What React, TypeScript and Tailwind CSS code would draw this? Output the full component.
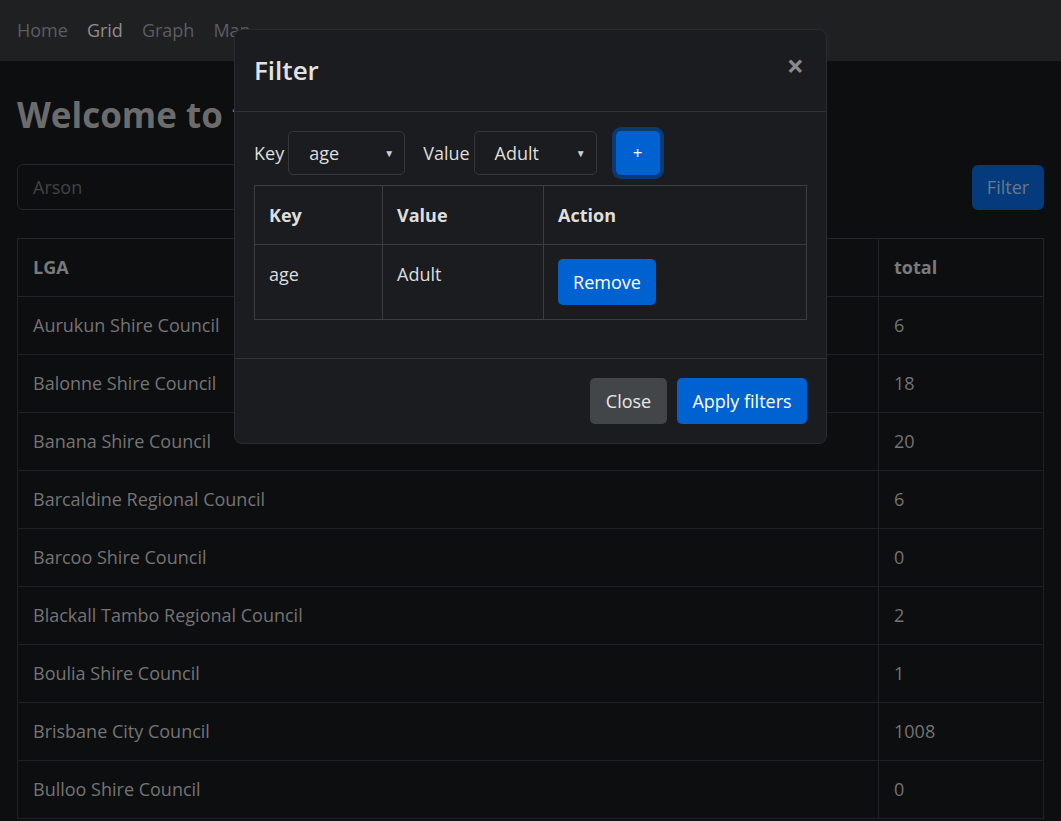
import React from 'react';

const rows: [string, string][] = [
  ['Aurukun Shire Council', '6'],
  ['Balonne Shire Council', '18'],
  ['Banana Shire Council', '20'],
  ['Barcaldine Regional Council', '6'],
  ['Barcoo Shire Council', '0'],
  ['Blackall Tambo Regional Council', '2'],
  ['Boulia Shire Council', '1'],
  ['Brisbane City Council', '1008'],
  ['Bulloo Shire Council', '0'],
];

const font = { fontFamily: '"Open Sans", "Noto Sans", sans-serif' };

function FakeSelect({ value, width }: { value: string; width: string }) {
  return (
    <div
      className={`${width} h-[44px] flex items-center justify-between pl-[20px] pr-[10px] border border-[#34373c] rounded-[5px] text-[18px] text-[#dedede]`}
    >
      <span>{value}</span>
      <span className="text-[10px] text-[#cfcfcf]">▼</span>
    </div>
  );
}

export default function App() {
  return (
    <div className="relative min-h-[821px] bg-[#0d0e10] overflow-hidden" style={font}>
      {/* Navbar */}
      <nav className="h-[61px] bg-[#1f2022] flex items-center gap-[19px] px-[17px] text-[18px] text-[#5c5d60]">
        <span>Home</span>
        <span className="text-[#8e8e8e]">Grid</span>
        <span>Graph</span>
        <span>Map</span>
      </nav>

      <main className="px-[17px]">
        <h1 className="mt-[30px] text-[35px] font-bold text-[#6c6c6c] leading-[48px]">
          Welcome to the Crime Stats
        </h1>

        <div className="mt-[25px] flex items-center">
          <div className="w-[760px] h-[46px] border border-[#25272a] rounded-[6px] flex items-center px-[15px] text-[18px] text-[#434446]">
            Arson
          </div>
          <div className="ml-auto w-[72px] h-[45px] bg-[#053a7c] rounded-[6px] flex items-center justify-center text-[18px] text-[#6b788a]">
            Filter
          </div>
        </div>

        <table className="mt-[28px] w-full border-collapse text-[18px] text-[#747474]">
          <thead>
            <tr className="h-[58px]">
              <th className="border border-[#232528] text-left px-[15px] font-bold text-[#7a7a7a]">LGA</th>
              <th className="border border-[#232528] text-left px-[15px] font-bold text-[#7a7a7a] w-[165px]">
                total
              </th>
            </tr>
          </thead>
          <tbody>
            {rows.map(([name, total]) => (
              <tr key={name} className="h-[58px]">
                <td className="border border-[#1f2124] px-[15px]">{name}</td>
                <td className="border border-[#1f2124] px-[15px]">{total}</td>
              </tr>
            ))}
          </tbody>
        </table>
      </main>

      {/* Modal */}
      <div className="fixed inset-0 flex justify-center">
        <div className="mt-[29px] w-[593px] h-fit bg-[#1b1c1f] border border-[#2a2c2f] rounded-[8px] text-[#dedede]">
          <div className="h-[82px] flex items-center justify-between px-[19px] border-b border-[#303236]">
            <h2 className="text-[26px] font-semibold text-[#e2e2e2]">Filter</h2>
            <span className="text-[30px] font-bold text-[#8a8a8a] leading-none -mt-[9px] mr-[3px]">×</span>
          </div>

          <div className="px-[19px] pt-[19px] pb-[38px]">
            <div className="flex items-center">
              <span className="text-[18px] mr-[4px]">Key</span>
              <FakeSelect value="age" width="w-[117px]" />
              <span className="text-[18px] ml-[18px] mr-[4px]">Value</span>
              <FakeSelect value="Adult" width="w-[123px]" />
              <div className="ml-[19px] w-[44px] h-[44px] rounded-[5px] bg-[#0062d1] shadow-[0_0_0_4px_#0a3a72] flex items-center justify-center text-white text-[17px]">
                +
              </div>
            </div>

            <table className="mt-[10px] w-full border-collapse text-[18px]">
              <thead>
                <tr className="h-[59px]">
                  <th className="border border-[#3a3d42] text-left px-[14px] font-bold w-[128px]">Key</th>
                  <th className="border border-[#3a3d42] text-left px-[14px] font-bold w-[161px]">Value</th>
                  <th className="border border-[#3a3d42] text-left px-[14px] font-bold">Action</th>
                </tr>
              </thead>
              <tbody>
                <tr>
                  <td className="border border-[#3a3d42] px-[14px] pt-[16px] align-top">age</td>
                  <td className="border border-[#3a3d42] px-[14px] pt-[16px] align-top">Adult</td>
                  <td className="border border-[#3a3d42] px-[14px] py-[14px]">
                    <div className="w-[98px] h-[46px] bg-[#0062d1] rounded-[5px] flex items-center justify-center text-white">
                      Remove
                    </div>
                  </td>
                </tr>
              </tbody>
            </table>
          </div>

          <div className="border-t border-[#303236] flex justify-end gap-[10px] px-[19px] pt-[19px] pb-[19px]">
            <div className="w-[77px] h-[46px] bg-[#424649] rounded-[5px] flex items-center justify-center text-[18px] text-[#e8e8e8]">
              Close
            </div>
            <div className="w-[130px] h-[46px] bg-[#0062d1] rounded-[5px] flex items-center justify-center text-[18px] text-white">
              Apply filters
            </div>
          </div>
        </div>
      </div>
    </div>
  );
}
